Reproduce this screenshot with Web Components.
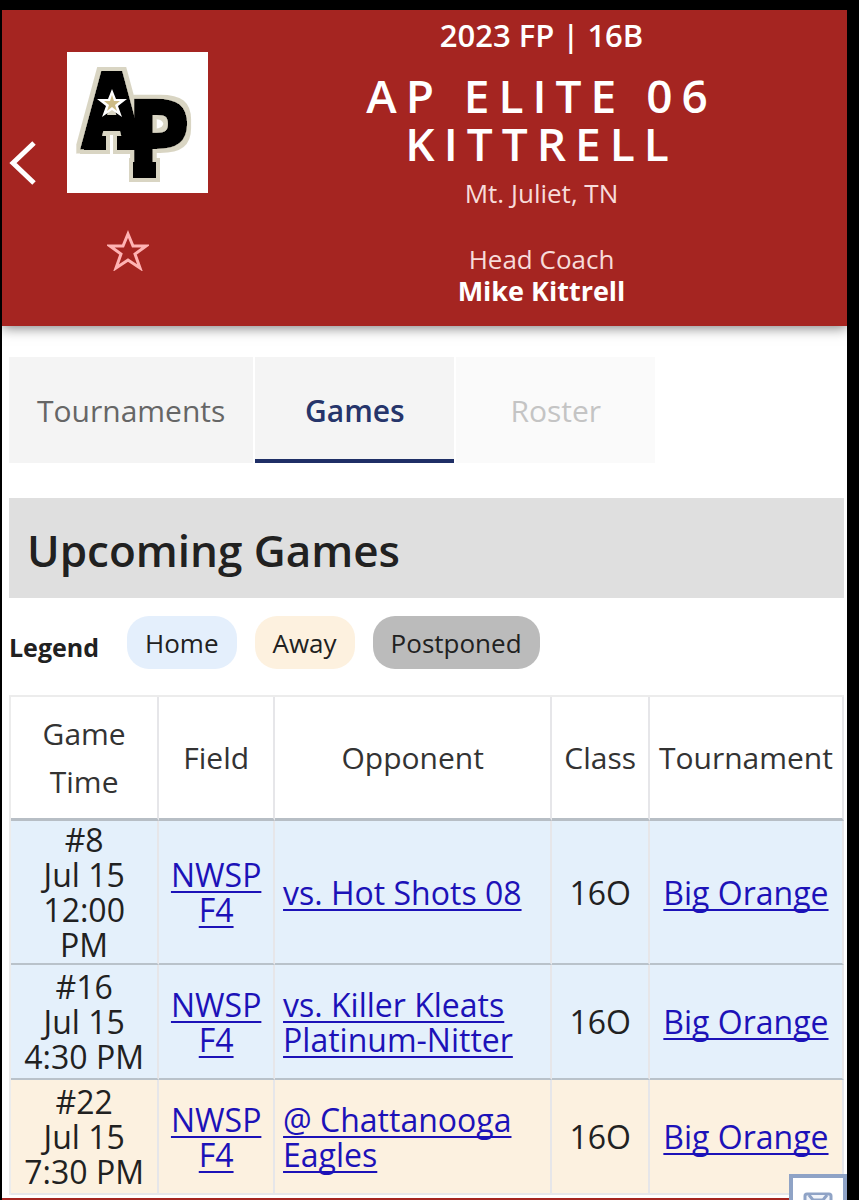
<!DOCTYPE html>
<html lang="en">
<head>
<meta charset="utf-8">
<meta name="viewport" content="width=device-width, initial-scale=1">
<title>AP Elite 06 Kittrell</title>
<style>
  body {
    margin: 0;
    background: #000;
    color: #212121;
    font-family: "Open Sans", "Noto Sans", sans-serif;
  }
</style>
</head>
<body>
<team-page>
  <team-header season="2023 FP | 16B" name="AP Elite 06 Kittrell" place="Mt. Juliet, TN" coach="Mike Kittrell"></team-header>
  <tab-bar>
    <tab-item>Tournaments</tab-item>
    <tab-item active>Games</tab-item>
    <tab-item disabled>Roster</tab-item>
  </tab-bar>
  <section-title>Upcoming Games</section-title>
  <game-legend>
    <legend-chip kind="home">Home</legend-chip>
    <legend-chip kind="away">Away</legend-chip>
    <legend-chip kind="postponed">Postponed</legend-chip>
  </game-legend>
  <game-table></game-table>
  <message-button slot="overlay"></message-button>
</team-page>

<script>
const games = [
  { kind: "home", number: "#8", date: "Jul 15", time: "12:00 PM", field: "NWSP F4", opponent: "vs. Hot Shots 08", level: "16O", tournament: "Big Orange" },
  { kind: "home", number: "#16", date: "Jul 15", time: "4:30 PM", field: "NWSP F4", opponent: "vs. Killer Kleats Platinum-Nitter", level: "16O", tournament: "Big Orange" },
  { kind: "away", number: "#22", date: "Jul 15", time: "7:30 PM", field: "NWSP F4", opponent: "@ Chattanooga Eagles", level: "16O", tournament: "Big Orange" },
];

class TeamPage extends HTMLElement {
  constructor() {
    super();
    this.attachShadow({ mode: "open" });
    this.shadowRoot.innerHTML = `
      <style>
        :host {
          display: flex;
          flex-direction: column;
          box-sizing: border-box;
          height: 100vh;
          padding: 10px 12px 0 2px;
          overflow: hidden;
        }
        main {
          position: relative;
          flex: 1;
          background: #fff;
          border-bottom: 2px solid #a52521;
        }
        .overlay {
          position: absolute;
          right: 0;
          bottom: -2px;
        }
      </style>
      <main>
        <slot></slot>
        <div class="overlay"><slot name="overlay"></slot></div>
      </main>`;
  }
}

class TeamLogo extends HTMLElement {
  constructor() {
    super();
    this.attachShadow({ mode: "open" });
    this.shadowRoot.innerHTML = `
      <style>
        :host { display: block; width: 141px; height: 141px; background: #fff; }
        svg { display: block; width: 100%; height: 100%; }
        text {
          font-family: "DejaVu Sans Mono", monospace;
          font-weight: bold;
          stroke: #000;
          stroke-width: 4;
        }
      </style>
      <svg viewBox="0 0 141 141" role="img" aria-label="AP logo">
        <filter id="edge" x="-20%" y="-20%" width="140%" height="140%">
          <feMorphology in="SourceAlpha" operator="dilate" radius="4" result="grown"/>
          <feFlood flood-color="#d9d5c3"/>
          <feComposite in2="grown" operator="in" result="rim"/>
          <feMerge><feMergeNode in="rim"/><feMergeNode in="SourceGraphic"/></feMerge>
        </filter>
        <g filter="url(#edge)">
          <text x="14" y="95" font-size="102">A<tspan x="61" y="123" font-size="102">P</tspan></text>
          <rect x="17" y="84" width="22" height="14"/>
          <rect x="50" y="84" width="22" height="14"/>
          <rect x="66" y="110" width="23" height="16"/>
        </g>
        <path d="M45 37l4 10h11l-9 7 4 11-10-7-10 7 4-11-9-7h11z" fill="#fff"/>
        <path d="M45 43l2 6h6l-5 4 2 6-5-4-5 4 2-6-5-4h6z" fill="#cdbb85"/>
      </svg>`;
  }
}

class TeamHeader extends HTMLElement {
  constructor() {
    super();
    this.attachShadow({ mode: "open" });
    this.shadowRoot.innerHTML = `
      <style>
        :host {
          display: grid;
          grid-template-columns: 36px 200px 1fr;
          box-sizing: border-box;
          min-height: 316px;
          background: #a52521;
          color: #fff;
          box-shadow: 0 2px 12px rgba(0, 0, 0, 0.5);
        }
        button {
          display: block;
          padding: 0;
          border: 0;
          background: none;
          cursor: pointer;
        }
        svg { display: block; }
        .back { align-self: start; padding: 131px 0 0 6px; }
        .badge { padding: 42px 0 0 29px; }
        .follow { margin: 36px 0 0 40px; }
        .info { padding: 7px 72px 0 70px; text-align: center; }
        p, h1 { margin: 0; }
        .season { font-size: 31px; line-height: 36px; font-weight: 600; }
        h1 {
          margin: 18px 0;
          font-size: 46px;
          line-height: 48px;
          font-weight: 600;
          letter-spacing: 9px;
          text-transform: uppercase;
        }
        .place, .label { font-size: 26px; line-height: 32px; font-weight: 400; color: #f7dcda; }
        .place { margin: -8px 0 34px; }
        .coach { font-size: 27px; line-height: 32px; font-weight: 700; }
      </style>
      <button class="back" aria-label="Back">
        <svg width="28" height="44" viewBox="0 0 28 44" fill="none" stroke="#fff" stroke-width="5"><path d="M26 2L5 22l21 20"/></svg>
      </button>
      <div class="badge">
        <team-logo></team-logo>
        <button class="follow" aria-label="Follow team">
          <svg width="42" height="42" viewBox="0 0 42 42" fill="none" stroke="#ffb3b3" stroke-width="3"><path d="M21 5l5 12h13L28 25l5 14-12-8-12 8 5-14L3 17h13z"/></svg>
        </button>
      </div>
      <div class="info">
        <p class="season"></p>
        <h1></h1>
        <p class="place"></p>
        <p class="label">Head Coach</p>
        <p class="coach"></p>
      </div>`;
  }

  connectedCallback() {
    const root = this.shadowRoot;
    root.querySelector(".season").textContent = this.getAttribute("season");
    root.querySelector("h1").textContent = this.getAttribute("name");
    root.querySelector(".place").textContent = this.getAttribute("place");
    root.querySelector(".coach").textContent = this.getAttribute("coach");
  }
}

class TabBar extends HTMLElement {
  constructor() {
    super();
    this.attachShadow({ mode: "open" });
    this.shadowRoot.innerHTML = `
      <style>
        :host { display: block; padding: 31px 4px 35px 7px; }
        nav { display: flex; gap: 2px; }
      </style>
      <nav><slot></slot></nav>`;
  }
}

class TabItem extends HTMLElement {
  constructor() {
    super();
    this.attachShadow({ mode: "open" });
    this.shadowRoot.innerHTML = `
      <style>
        :host { display: block; }
        button {
          box-sizing: border-box;
          min-width: 199px;
          height: 106px;
          padding: 4px 28px 0;
          border: 0;
          border-bottom: 4px solid transparent;
          background: #f4f4f4;
          color: #666;
          font: 500 30px "Open Sans", "Noto Sans", sans-serif;
        }
        :host([active]) button { border-bottom-color: #1f2f66; color: #26356b; font-weight: 600; }
        :host([disabled]) button { background: #fafafa; color: #c4c4c4; }
      </style>
      <button><slot></slot></button>`;
  }

  connectedCallback() {
    this.shadowRoot.querySelector("button").disabled = this.hasAttribute("disabled");
  }
}

class SectionTitle extends HTMLElement {
  constructor() {
    super();
    this.attachShadow({ mode: "open" });
    this.shadowRoot.innerHTML = `
      <style>
        :host { display: block; margin: 0 3px 0 7px; background: #dfdfdf; }
        h2 { margin: 0; padding: 24px 18px 20px; font-size: 44px; line-height: 56px; font-weight: 600; }
      </style>
      <h2><slot></slot></h2>`;
  }
}

class GameLegend extends HTMLElement {
  constructor() {
    super();
    this.attachShadow({ mode: "open" });
    this.shadowRoot.innerHTML = `
      <style>
        :host { display: flex; align-items: center; gap: 18px; padding: 18px 7px 26px; }
        b { margin-right: 10px; padding-top: 8px; font-size: 25px; line-height: 36px; font-weight: 700; }
      </style>
      <b>Legend</b>
      <slot></slot>`;
  }
}

class LegendChip extends HTMLElement {
  constructor() {
    super();
    this.attachShadow({ mode: "open" });
    this.shadowRoot.innerHTML = `
      <style>
        :host {
          display: block;
          padding: 9px 18px 8px;
          border-radius: 22px;
          font-size: 26px;
          line-height: 36px;
        }
        :host([kind="home"]) { background: #e4effc; }
        :host([kind="away"]) { background: #fdf1df; }
        :host([kind="postponed"]) { background: #bbb; }
      </style>
      <slot></slot>`;
  }
}

class GameTable extends HTMLElement {
  constructor() {
    super();
    this.attachShadow({ mode: "open" });
    this.shadowRoot.innerHTML = `
      <style>
        :host { display: block; padding: 0 3px 0 7px; }
        table {
          width: 100%;
          table-layout: fixed;
          border-collapse: separate;
          border-spacing: 0;
          border-top: 2px solid #ececec;
          border-left: 2px solid #ececec;
          font-size: 32px;
          line-height: 35px;
          text-align: center;
        }
        th, td { box-sizing: border-box; border-right: 2px solid #e6e6e9; }
        th {
          height: 124px;
          padding: 0 4px;
          border-bottom: 3px solid #b7bec5;
          font-size: 30px;
          font-weight: 400;
          line-height: 48px;
          color: #333;
        }
        td { height: 115px; padding: 1px 8px; border-bottom: 2px solid #b9c2ca; }
        td.opponent { text-align: left; }
        tr:last-child td { border-bottom-color: #e6e6e9; }
        .home { background: #e4f0fb; }
        .away { background: #fcf1e0; }
        a { color: #1c12b8; text-decoration-thickness: 2px; text-underline-offset: 4px; text-decoration-skip-ink: none; }
        .time { width: 17.8%; }
        .field { width: 13.9%; }
        .opponent { width: 33.3%; }
        .level { width: 11.7%; }
      </style>
      <table>
        <thead>
          <tr>
            <th class="time">Game Time</th>
            <th class="field">Field</th>
            <th class="opponent">Opponent</th>
            <th class="level">Class</th>
            <th>Tournament</th>
          </tr>
        </thead>
        <tbody>
          ${games
            .map((game) => {
              return `<tr class="${game.kind}">
                <td>${game.number}<br>${game.date}<br>${game.time}</td>
                <td><a href="#field">${game.field}</a></td>
                <td class="opponent"><a href="#opponent">${game.opponent}</a></td>
                <td>${game.level}</td>
                <td><a href="#tournament">${game.tournament}</a></td>
              </tr>`;
            })
            .join("")}
        </tbody>
      </table>`;
  }
}

class MessageButton extends HTMLElement {
  constructor() {
    super();
    this.attachShadow({ mode: "open" });
    this.shadowRoot.innerHTML = `
      <style>
        :host { display: block; height: 26px; overflow: hidden; }
        button {
          display: block;
          box-sizing: border-box;
          width: 58px;
          height: 58px;
          padding: 12px 0 0;
          border: 4px solid #8fa3c6;
          background: #fff;
        }
        svg { display: block; margin: 0 auto; }
      </style>
      <button aria-label="Messages">
        <svg width="30" height="34" viewBox="0 0 30 34" fill="#f1f4fa" stroke="#8fa3c6" stroke-width="3"><rect x="2" y="2" width="26" height="30" rx="2"/><path d="M6 3l4 5h10l4-5"/></svg>
      </button>`;
  }
}

customElements.define("team-logo", TeamLogo);
customElements.define("team-header", TeamHeader);
customElements.define("tab-item", TabItem);
customElements.define("tab-bar", TabBar);
customElements.define("section-title", SectionTitle);
customElements.define("legend-chip", LegendChip);
customElements.define("game-legend", GameLegend);
customElements.define("game-table", GameTable);
customElements.define("message-button", MessageButton);
customElements.define("team-page", TeamPage);
</script>
</body>
</html>
